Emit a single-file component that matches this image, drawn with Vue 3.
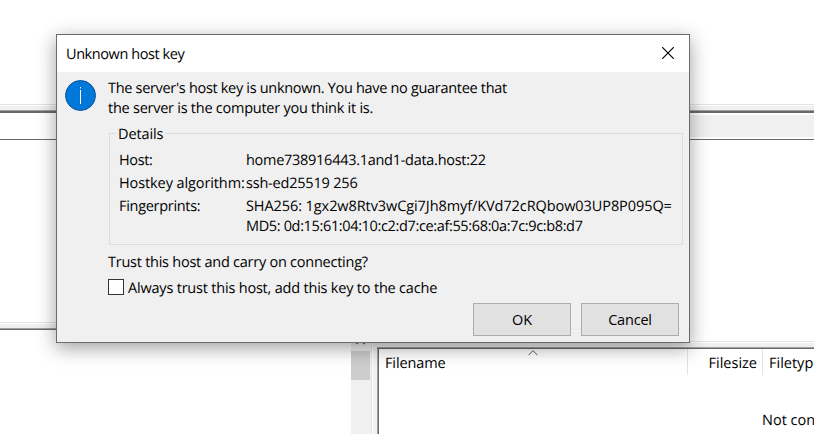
<script setup>
import { ref } from 'vue'

const message = [
  { text: "The server's host key is unknown. You have no guarantee that", cls: 'msg-1' },
  { text: 'the server is the computer you think it is.', cls: 'msg-2' }
]

const details = [
  { label: 'Host:', cls: 'host', values: ['home738916443.1and1-data.host:22'] },
  { label: 'Hostkey algorithm:', cls: 'algo', values: ['ssh-ed25519 256'] },
  {
    label: 'Fingerprints:',
    cls: 'prints',
    values: [
      'SHA256: 1gx2w8Rtv3wCgi7Jh8myf/KVd72cRQbow03UP8P095Q=',
      'MD5: 0d:15:61:04:10:c2:d7:ce:af:55:68:0a:7c:9c:b8:d7'
    ]
  }
]

const alwaysTrust = ref(false)
const open = ref(true)
</script>

<template>
  <div class="window">
    <!-- Main window behind the dialog -->
    <div class="log-pane"></div>
    <div class="splitter thick"></div>

    <div class="panes">
      <div class="local">
        <div class="local-head"></div>
        <div class="local-tree"></div>
        <div class="splitter"></div>
        <div class="local-list">
          <div class="scrollbar">
            <svg class="scroll-up" width="9" height="6" viewBox="0 0 9 6">
              <path d="M0.5 5 L4.5 1 L8.5 5" fill="none" stroke="#505050" stroke-width="1.4" />
            </svg>
            <div class="thumb"></div>
          </div>
        </div>
      </div>
      <div class="remote">
        <div class="remote-head"></div>
        <div class="remote-tree"></div>
        <div class="remote-bottom">
          <div class="gutter"></div>
          <div class="remote-main">
            <div class="splitter"></div>
            <div class="remote-list">
              <div class="columns">
                <div class="col name">
                  <span>Filename</span>
                  <svg class="sort" width="10" height="6" viewBox="0 0 10 6">
                    <path d="M0.5 5.2 L5 0.7 L9.5 5.2" fill="none" stroke="#5c5c5c" stroke-width="1" />
                  </svg>
                </div>
                <div class="col size"><span>Filesize</span></div>
                <div class="col type"><span>Filetype</span></div>
              </div>
              <div class="empty"><span>Not connected to any server</span></div>
            </div>
          </div>
        </div>
      </div>
    </div>

    <!-- Dialog -->
    <div v-if="open" class="dialog">
      <header class="titlebar">
        <span class="title">Unknown host key</span>
        <svg class="close" width="12" height="12" viewBox="0 0 12 12" @click="open = false">
          <path d="M0.2 0.2 L11.8 11.8 M11.8 0.2 L0.2 11.8" stroke="#000" stroke-width="1.2" />
        </svg>
      </header>

      <div class="body">
        <svg class="info" width="31" height="31" viewBox="0 0 31 31">
          <circle cx="15.5" cy="15.5" r="15" fill="#0078d7" stroke="#0a549b" stroke-width="1" />
          <rect x="15" y="7" width="1" height="1.4" fill="#fff" />
          <rect x="15" y="10" width="1" height="14" fill="#fff" />
        </svg>

        <div class="content">
          <p v-for="m in message" :key="m.cls" class="line"><span :class="m.cls">{{ m.text }}</span></p>

          <fieldset class="details">
            <legend><span>Details</span></legend>
            <div v-for="d in details" :key="d.cls" class="row" :class="d.cls">
              <span class="key">{{ d.label }}</span>
              <div class="values">
                <div v-for="(v, i) in d.values" :key="i" :class="'v' + i">{{ v }}</div>
              </div>
            </div>
          </fieldset>

          <p class="line trust"><span>Trust this host and carry on connecting?</span></p>
          <label class="check">
            <input v-model="alwaysTrust" type="checkbox" />
            <span>Always trust this host, add this key to the cache</span>
          </label>

          <div class="buttons">
            <button class="ok" @click="open = false"><span>OK</span></button>
            <button class="cancel" @click="open = false"><span>Cancel</span></button>
          </div>
        </div>
      </div>
    </div>
  </div>
</template>

<style scoped>
.window {
  position: relative;
  display: flex;
  flex-direction: column;
  width: 814px;
  height: 434px;
  overflow: hidden;
  background: #fff;
  color: #000;
  font: 14.5px/20px 'Open Sans', 'Noto Sans', sans-serif;
  letter-spacing: -0.25px;
  text-rendering: geometricPrecision;
  white-space: nowrap;
}

/* BACKGROUND WINDOW */
.log-pane { height: 104px; }
.splitter {
  flex: none;
  box-sizing: border-box;
  height: 8px;
  border-top: 1px solid #e3e3e3;
  border-bottom: 1px solid #696969;
  background: linear-gradient(#fff 1px, #f0f0f0 1px, #f0f0f0 5px, #a0a0a0 5px);
}
.splitter.thick { height: 9px; border-bottom-width: 2px; }
.panes { display: flex; height: 321px; }
.local { display: flex; flex-direction: column; width: 373px; }
.local-head { height: 26px; border-bottom: 1px solid #696969; }
.local-tree { height: 182px; }
.local-list { flex: 1; display: flex; justify-content: flex-end; }
.scrollbar {
  width: 20px;
  margin-right: 1px;
  padding-top: 9px;
  border-right: 1px solid #e3e3e3;
  background: #f0f0f0;
}
.scroll-up { display: block; margin-left: 5px; }
.thumb { width: 19px; height: 29px; margin-top: 6px; background: #cdcdcd; }
.remote { flex: 1; display: flex; flex-direction: column; min-width: 0; }
.remote-head {
  height: 22px;
  border-top: 2px solid #fff;
  border-bottom: 2px solid #fff;
  background: #f0f0f0;
  box-shadow: 0 1px 0 #696969;
}
.remote-tree { height: 202px; }
.remote-bottom { flex: 1; display: flex; }
.gutter { flex: none; width: 4px; background: #f0f0f0; }
.remote-main { flex: 1; display: flex; flex-direction: column; min-width: 0; }
.remote-list {
  flex: 1;
  border-left: 1px solid #696969;
  margin-left: 1px;
  box-shadow: -1px 0 0 #a0a0a0;
}
.columns { display: flex; height: 26px; }
.col { flex: none; box-sizing: border-box; padding-top: 5px; border-right: 1px solid #e3e3e3; }
.col.name { display: flex; width: 309px; padding-left: 6px; letter-spacing: -0.12px; }
.col.name span { width: 60px; }
.col.size { width: 75px; padding-right: 5px; text-align: right; letter-spacing: 0; }
.col.type { padding-left: 6px; border-right: 0; letter-spacing: 0; }
.sort { margin: -4px 0 0 83px; }
.empty { margin: 36px 0 0 383px; letter-spacing: 0; }

/* DIALOG */
.dialog {
  position: absolute;
  left: 56px;
  top: 34px;
  box-sizing: border-box;
  width: 634px;
  height: 309px;
  border: 1px solid #6b6b6b;
  background: #f0f0f0;
  box-shadow: 0 5px 18px rgba(0, 0, 0, 0.38);
}
.titlebar {
  display: flex;
  justify-content: space-between;
  box-sizing: border-box;
  height: 37px;
  padding: 10px 15px 0 9px;
  background: #fff;
}
.title { letter-spacing: -0.42px; }
.close { margin-top: 2px; }
.body { display: flex; padding: 7px 6px 0 8px; }
.info { flex: none; margin-top: 1px; }
.content { flex: 1; margin-left: 12px; min-width: 0; }
.line { margin: 0; height: 20px; }
.msg-1 { letter-spacing: -0.31px; }
.details {
  position: relative;
  box-sizing: border-box;
  width: 574px;
  min-width: 0;
  height: 112px;
  margin: 14px 0 0 1px;
  padding: 17px 0 0 9px;
  border: 1px solid #dcdcdc;
}
/* caption sits over the frame line */
legend {
  position: absolute;
  left: 6px;
  top: -9px;
  width: 50px;
  box-sizing: border-box;
  padding: 0 0 0 2px;
  background: #f0f0f0;
  letter-spacing: -0.1px;
}
.row { display: flex; margin-bottom: 3px; }
.key { flex: none; width: 127px; }
.host .key { letter-spacing: -0.35px; }
.algo .key { letter-spacing: -0.1px; }
.prints .key { letter-spacing: -0.3px; }
.host .values { letter-spacing: -0.28px; }
.algo .values { letter-spacing: -0.2px; }
.prints .v0 { letter-spacing: -0.08px; }
.prints .v1 { letter-spacing: -0.35px; }
.trust { margin-top: 8px; }
.check { display: flex; height: 20px; margin-top: 6px; letter-spacing: -0.2px; }
.check input {
  appearance: none;
  box-sizing: border-box;
  width: 16px;
  height: 16px;
  margin: 0 4px 0 0;
  border: 1px solid #333;
  background: #fff;
}
.check input:checked { box-shadow: inset 0 0 0 3px #fff; background: #333; }
.buttons { display: flex; justify-content: flex-end; gap: 10px; margin: 4px 4px 0 0; }
.buttons button {
  box-sizing: border-box;
  width: 98px;
  height: 33px;
  padding: 1px 0 0;
  border: 1px solid #adadad;
  border-radius: 0;
  background: #e1e1e1;
  color: #000;
  font: inherit;
  letter-spacing: -0.2px;
}
</style>
